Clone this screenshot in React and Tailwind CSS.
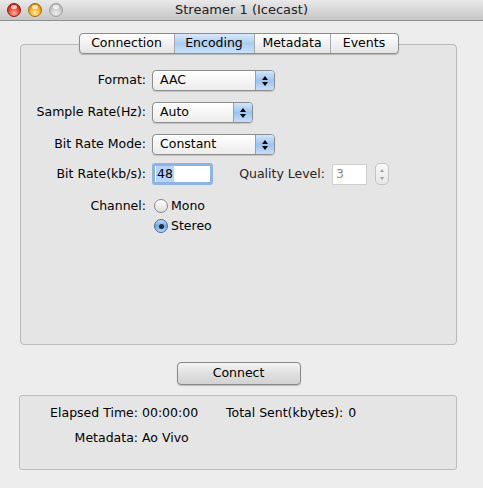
const font = { fontFamily: '"DejaVu Sans", "Lucida Grande", sans-serif' };

const TrafficLight = ({ color }) => {
  const styles = {
    red: "bg-[radial-gradient(circle_at_50%_75%,#ffb0a4_0%,#f0402f_50%,#b0160e_100%)] border-[#8a1a12]",
    yellow: "bg-[radial-gradient(circle_at_50%_75%,#ffeaa0_0%,#f5ac22_50%,#b86c08_100%)] border-[#9a6a10]",
    gray: "bg-[radial-gradient(circle_at_50%_75%,#ececec_0%,#cbcbcb_50%,#a6a6a6_100%)] border-[#a0a0a0]",
  };
  return (
    <div className={`relative w-[14px] h-[14px] rounded-full border ${styles[color]}`}>
      <div className="absolute top-[1px] left-[3px] w-[6px] h-[4px] rounded-full bg-white/70" />
    </div>
  );
};

const PopUp = ({ value, width }) => (
  <div
    className={`flex items-stretch h-[21px] rounded-[4px] border border-[#8d8d8d] bg-gradient-to-b from-white to-[#ececec] shadow-[0_1px_1px_rgba(0,0,0,0.15)] overflow-hidden ${width}`}
  >
    <div className="flex-1 flex items-center pl-[7px] text-black">{value}</div>
    <div className="w-[19px] flex flex-col items-center justify-center gap-[2px] border-l border-[#8aa3c2] bg-gradient-to-b from-[#d3e6fb] via-[#9cc4f0] to-[#c6ddf8]">
      <div className="w-0 h-0 border-l-[3px] border-r-[3px] border-b-[4px] border-l-transparent border-r-transparent border-b-black" />
      <div className="w-0 h-0 border-l-[3px] border-r-[3px] border-t-[4px] border-l-transparent border-r-transparent border-t-black" />
    </div>
  </div>
);

const Radio = ({ checked, label }) => (
  <div className="flex items-center gap-[3px] h-[18px]">
    {checked ? (
      <div className="w-[14px] h-[14px] rounded-full border border-[#4b6a94] bg-gradient-to-b from-[#c4dcf7] via-[#6fa6e6] to-[#b8d6f7] flex items-center justify-center">
        <div className="w-[5px] h-[5px] rounded-full bg-[#1c2a3a]" />
      </div>
    ) : (
      <div className="w-[14px] h-[14px] rounded-full border border-[#8a8a8a] bg-gradient-to-b from-white to-[#dcdcdc]" />
    )}
    <span className="text-black">{label}</span>
  </div>
);

const Label = ({ children }) => (
  <div className="w-[125px] shrink-0 text-right whitespace-nowrap text-black">{children}</div>
);

export default function App() {
  const tabs = [
    { name: "Connection", w: "w-[94px]" },
    { name: "Encoding", w: "w-[80px]" },
    { name: "Metadata", w: "w-[76px]" },
    { name: "Events", w: "w-[68px]" },
  ];
  return (
    <div style={font} className="w-[483px] h-[488px] bg-[#ededed] flex flex-col overflow-hidden text-[12.5px]">
      {/* title bar */}
      <div className="relative h-[21px] flex items-center justify-center border-b border-[#8e8e8e] bg-gradient-to-b from-[#e9e9e9] to-[#c6c6c6]">
        <div className="absolute left-[7px] top-[3px] flex gap-[7px]">
          <TrafficLight color="red" />
          <TrafficLight color="yellow" />
          <TrafficLight color="gray" />
        </div>
        <span className="text-[13px] text-[#222]">Streamer 1 (Icecast)</span>
      </div>

      {/* tab view */}
      <div className="mt-[12px] ml-[20px] w-[437px] flex flex-col">
        <div className="relative z-10 flex justify-center -mb-[10px]">
          <div className="flex h-[21px] rounded-[4px] border border-[#8c8c8c] bg-gradient-to-b from-white to-[#e4e4e4] shadow-[0_1px_1px_rgba(0,0,0,0.2)] overflow-hidden">
            {tabs.map((t, i) => (
              <div
                key={t.name}
                className={`flex items-center justify-center text-black ${t.w} ${i > 0 ? "border-l border-[#a8a8a8]" : ""} ${
                  t.name === "Encoding" ? "bg-gradient-to-b from-[#d9e9fb] via-[#a9cdf3] to-[#c9e1fa]" : ""
                }`}
              >
                {t.name}
              </div>
            ))}
          </div>
        </div>
        <div className="h-[301px] rounded-[4px] border border-[#b9b9b9] bg-[#e5e5e5] pt-[25px]">
          <div className="flex items-center h-[21px]">
            <Label>Format:</Label>
            <div className="ml-[6px]">
              <PopUp value="AAC" width="w-[123px]" />
            </div>
          </div>
          <div className="flex items-center h-[21px] mt-[11px]">
            <Label>Sample Rate(Hz):</Label>
            <div className="ml-[6px]">
              <PopUp value="Auto" width="w-[101px]" />
            </div>
          </div>
          <div className="flex items-center h-[21px] mt-[11px]">
            <Label>Bit Rate Mode:</Label>
            <div className="ml-[6px]">
              <PopUp value="Constant" width="w-[123px]" />
            </div>
          </div>
          <div className="flex items-center h-[22px] mt-[8px]">
            <Label>Bit Rate(kb/s):</Label>
            <div className="ml-[6px] w-[61px] h-[22px] rounded-[3px] border-[3px] border-[#8fb4e3] bg-white flex items-center pl-[1px]">
              <span className="text-black bg-[#b5d5ff] px-[1px] leading-[16px]">48</span>
            </div>
            <span className="w-[112px] text-right whitespace-nowrap text-neutral-800">Quality Level:</span>
            <div className="ml-[7px] w-[35px] h-[21px] border border-[#cfcfcf] bg-white flex items-center pl-[3px] text-[#8a8a8a]">
              3
            </div>
            <div className="ml-[8px] w-[14px] h-[22px] rounded-[5px] border border-[#c4c4c4] bg-gradient-to-b from-[#f8f8f8] to-[#e6e6e6] flex flex-col items-center justify-center gap-[5px]">
              <div className="w-0 h-0 border-l-[2px] border-r-[2px] border-b-[3px] border-l-transparent border-r-transparent border-b-[#a0a0a0]" />
              <div className="w-0 h-0 border-l-[2px] border-r-[2px] border-t-[3px] border-l-transparent border-r-transparent border-t-[#a0a0a0]" />
            </div>
          </div>
          <div className="flex items-start mt-[12px]">
            <div className="h-[18px] flex items-center">
              <Label>Channel:</Label>
            </div>
            <div className="flex flex-col gap-[2px] ml-[8px]">
              <Radio label="Mono" />
              <Radio label="Stereo" checked />
            </div>
          </div>
        </div>
      </div>

      {/* connect */}
      <div className="flex justify-center mt-[17px] pr-[6px]">
        <div className="w-[124px] h-[23px] rounded-[4px] border border-[#878787] bg-gradient-to-b from-[#f4f4f4] via-[#e0e0e0] to-[#d2d2d2] shadow-[0_1px_1px_rgba(0,0,0,0.2)] flex items-center justify-center text-black">
          Connect
        </div>
      </div>

      {/* status box */}
      <div className="mt-[10px] ml-[19px] w-[438px] h-[75px] rounded-[3px] border border-[#bdbdbd] bg-[#e5e5e5] pt-[9px] text-black">
        <div className="flex items-center h-[16px]">
          <div className="w-[118px] text-right whitespace-nowrap">Elapsed Time:</div>
          <div className="ml-[4px] w-[84px]">00:00:00</div>
          <div className="whitespace-nowrap">Total Sent(kbytes):</div>
          <div className="ml-[5px]">0</div>
        </div>
        <div className="flex items-center h-[16px] mt-[9px]">
          <div className="w-[118px] text-right">Metadata:</div>
          <div className="ml-[4px]">Ao Vivo</div>
        </div>
      </div>
    </div>
  );
}
